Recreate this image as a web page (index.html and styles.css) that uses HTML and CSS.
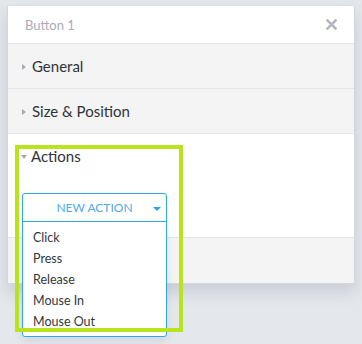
FILE: index.html
```html
<!DOCTYPE html>
<html lang="en">
<head>
    <meta charset="UTF-8">
    <title>Button 1</title>
    <link rel="stylesheet" href="styles.css">
</head>
<body>
    <div class="panel">
        <div class="panel-header">
            <span class="panel-title">Button 1</span>
            <svg class="close" width="11" height="11" viewBox="0 0 11 11">
                <path d="M1.5 1.5 L9.5 9.5 M9.5 1.5 L1.5 9.5" stroke="#b3b7bd" stroke-width="2.6" stroke-linecap="square"/>
            </svg>
        </div>
        <div class="section closed">
            <span class="caret-right"></span>
            <span class="section-title">General</span>
        </div>
        <div class="section closed">
            <span class="caret-right"></span>
            <span class="section-title">Size &amp; Position</span>
        </div>
        <div class="section open">
            <div class="section-head">
                <span class="caret-down"></span>
                <span class="section-title">Actions</span>
            </div>
            <div class="dropdown">
                <div class="dropdown-toggle">
                    <span>NEW ACTION</span>
                    <span class="toggle-caret"></span>
                </div>
                <ul class="dropdown-menu">
                    <li>Click</li>
                    <li>Press</li>
                    <li>Release</li>
                    <li>Mouse In</li>
                    <li>Mouse Out</li>
                </ul>
            </div>
        </div>
        <div class="panel-footer"></div>
    </div>
    <div class="highlight"></div>
</body>
</html>
```

FILE: styles.css
```css
* {
    margin: 0;
    padding: 0;
    box-sizing: border-box;
    font-family: 'Lato', 'Open Sans', sans-serif;
}

body {
    background-color: #e4e7ec;
    width: 362px;
    height: 344px;
    overflow: hidden;
    position: relative;
    padding: 5px 7px 0 7px;
}

.panel {
    background-color: white;
    border: 1px solid #d3d7dd;
    border-top-color: #dde0e5;
    width: 348px;
    box-shadow: 0 8px 14px rgba(120, 128, 140, 0.25);
}

.panel-header {
    height: 38px;
    border-bottom: 1px solid #e1e4e8;
    display: flex;
    align-items: center;
    justify-content: space-between;
    padding: 0 17px 0 17px;
}

.panel-title {
    color: #a9acb1;
    font-size: 13px;
}

.close {
    display: block;
}

.section {
    border-bottom: 1px solid #e1e4e8;
}

.section.closed {
    background-color: #f4f4f4;
    height: 45px;
    display: flex;
    align-items: center;
    padding-left: 14px;
}

.section-title {
    color: #2f3338;
    font-size: 15px;
}

.caret-right {
    width: 0;
    height: 0;
    border-top: 3.5px solid transparent;
    border-bottom: 3.5px solid transparent;
    border-left: 4px solid #a5aab1;
    margin-right: 6px;
    margin-top: 1px;
}

.section.open {
    height: 104px;
    padding: 13px 0 0 13px;
}

.section-head {
    display: flex;
    align-items: center;
}

.caret-down {
    width: 0;
    height: 0;
    border-left: 3.5px solid transparent;
    border-right: 3.5px solid transparent;
    border-top: 4px solid #a5aab1;
    margin-right: 4px;
    margin-top: 1px;
}

.dropdown {
    position: relative;
    width: 145px;
    margin-top: 28px;
    margin-left: 1px;
    z-index: 2;
}

.dropdown-toggle {
    height: 29px;
    border: 1px solid #2ea7ec;
    border-radius: 3px 3px 0 0;
    background-color: white;
    display: flex;
    align-items: center;
    justify-content: center;
    color: #4fa9ef;
    font-size: 12px;
    position: relative;
}

.toggle-caret {
    position: absolute;
    right: 5px;
    top: 13px;
    width: 0;
    height: 0;
    border-left: 4px solid transparent;
    border-right: 4px solid transparent;
    border-top: 4px solid #2aa3e8;
}

.dropdown-menu {
    position: absolute;
    top: 28px;
    left: 0;
    width: 145px;
    list-style: none;
    background-color: white;
    border: 1px solid #2ea7ec;
    border-radius: 0 0 3px 3px;
    padding: 5px 0 4px 10px;
    box-shadow: 0 4px 10px rgba(0, 0, 0, 0.08);
}

.dropdown-menu li {
    color: #33373c;
    font-size: 12.5px;
    line-height: 21px;
}

.panel-footer {
    background-color: #f4f4f4;
    height: 45px;
}

.highlight {
    position: absolute;
    left: 15px;
    top: 145px;
    width: 168px;
    height: 187px;
    border: 4px solid #b9e31c;
    z-index: 3;
    pointer-events: none;
}
```
